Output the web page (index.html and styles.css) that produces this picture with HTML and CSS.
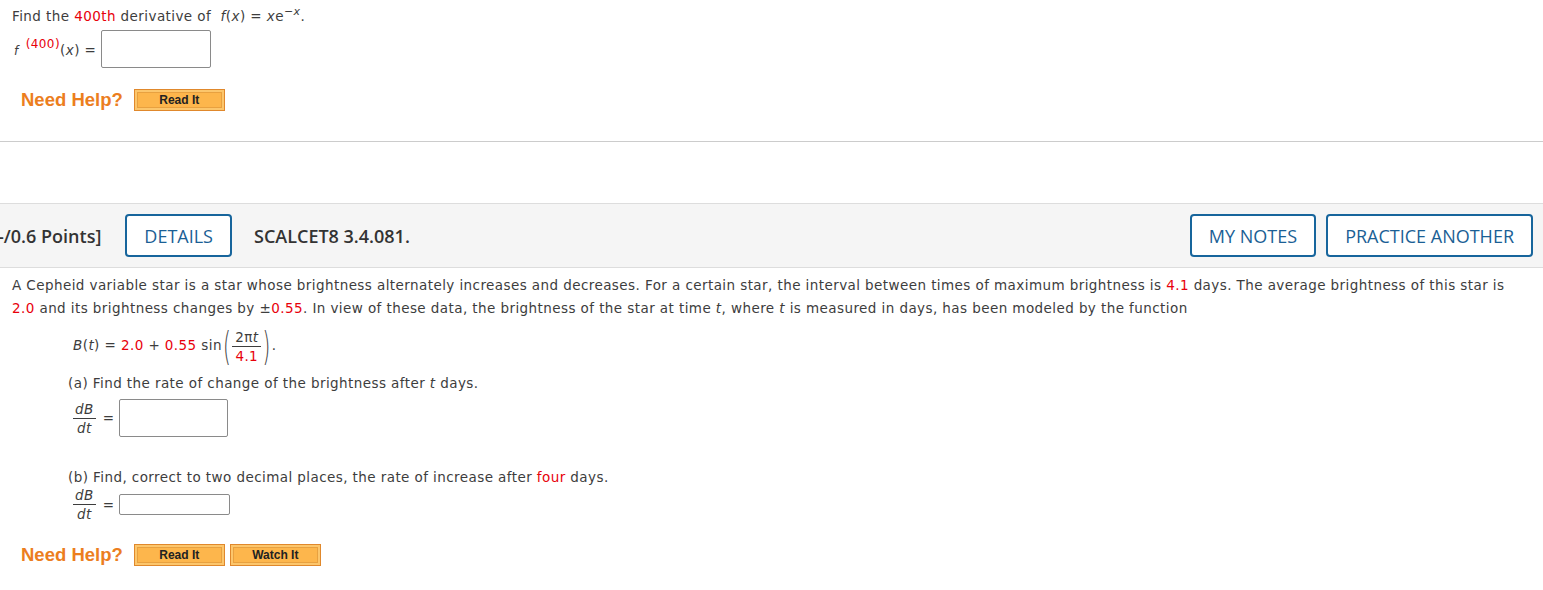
FILE: index.html
```html
<!DOCTYPE html>
<html lang="en">
<head>
  <meta charset="UTF-8">
  <title>Question</title>
  <link rel="stylesheet" href="styles.css">
</head>
<body>
  <div class="question first">
    <p class="line">Find the <span class="red">400th</span> derivative of &nbsp;<i>f</i>(<i>x</i>) = <i>x</i>e<sup class="exp">&minus;<i>x</i></sup>.</p>
    <div class="answer-row">
      <span class="lhs"><i class="ff">f</i><sup class="red order">(400)</sup>(<i>x</i>) =</span>
      <input type="text" class="box big">
    </div>
    <div class="help-row">
      <span class="need-help">Need Help?</span>
      <button class="help-btn">Read It</button>
    </div>
  </div>

  <hr class="divider">

  <div class="qbar">
    <span class="points">-/0.6 Points]</span>
    <button class="outline-btn">DETAILS</button>
    <span class="qid">SCALCET8 3.4.081.</span>
    <span class="spacer"></span>
    <button class="outline-btn">MY NOTES</button>
    <button class="outline-btn">PRACTICE ANOTHER</button>
  </div>

  <div class="question second">
    <p class="para">A Cepheid variable star is a star whose brightness alternately increases and decreases. For a certain star, the interval between times of maximum brightness is <span class="red">4.1</span> days. The average brightness of this star is <span class="red">2.0</span> and its brightness changes by &plusmn;<span class="red">0.55</span>. In view of these data, the brightness of the star at time <i>t</i>, where <i>t</i> is measured in days, has been modeled by the function</p>

    <div class="formula"><i>B</i>(<i>t</i>) = <span class="red">2.0</span> + <span class="red">0.55</span> sin<span class="paren">(</span><span class="frac small"><span class="num">2&pi;<i>t</i></span><span class="den red">4.1</span></span><span class="paren">)</span>.</div>

    <p class="part">(a) Find the rate of change of the brightness after <i>t</i> days.</p>
    <div class="deriv-row a">
      <span class="frac"><span class="num"><i>dB</i></span><span class="den"><i>dt</i></span></span>
      <span class="eq">=</span>
      <input type="text" class="box big2">
    </div>

    <p class="part b">(b) Find, correct to two decimal places, the rate of increase after <span class="red">four</span> days.</p>
    <div class="deriv-row">
      <span class="frac"><span class="num"><i>dB</i></span><span class="den"><i>dt</i></span></span>
      <span class="eq">=</span>
      <input type="text" class="box small-box">
    </div>

    <div class="help-row last">
      <span class="need-help">Need Help?</span>
      <button class="help-btn">Read It</button>
      <button class="help-btn">Watch It</button>
    </div>
  </div>
</body>
</html>
```

FILE: styles.css
```css
body {
  margin: 0;
  font-family: "DejaVu Sans", Verdana, sans-serif;
  font-size: 13.5px;
  letter-spacing: 0.42px;
  color: #3d3d3d;
  background: #fff;
}
.red {
  color: #e8000b;
}
p {
  margin: 0;
}
.question {
  padding: 0 12px;
}
.first {
  padding-top: 8px;
}
.line {
  line-height: 17px;
}
.exp {
  font-size: 11px;
  line-height: 0;
  vertical-align: 6px;
}
.answer-row {
  display: flex;
  align-items: center;
  gap: 5px;
  margin-top: 5px;
}
.lhs {
  padding-left: 2px;
  padding-top: 2px;
}
.ff {
  font-size: 12px;
  margin-right: 7px;
}
.order {
  font-size: 12px;
  line-height: 0;
  vertical-align: 7px;
}
.box {
  box-sizing: border-box;
  border: 1px solid #8a8a8a;
  border-radius: 2px;
  background: #fff;
  margin: 0;
  padding: 0;
}
.big {
  width: 110px;
  height: 38px;
}
.big2 {
  width: 109px;
  height: 38px;
}
.small-box {
  width: 111px;
  height: 21px;
}
.help-row {
  display: flex;
  align-items: center;
  margin-top: 21px;
  padding-left: 9px;
  letter-spacing: 0;
}
.need-help {
  font-family: "Liberation Sans", Arial, sans-serif;
  font-weight: bold;
  font-size: 18.5px;
  color: #ec7e1e;
  margin-right: 11px;
}
.help-btn {
  width: 91px;
  height: 22px;
  margin: 0 5px 0 0;
  padding: 0;
  font-family: "Liberation Sans", Arial, sans-serif;
  font-weight: bold;
  font-size: 12px;
  color: #222;
  background: #fdb64c;
  border: 1px solid #e0882c;
  box-shadow: inset 0 0 0 2px #fcc66c, inset 0 0 0 3px #e8a140;
  cursor: pointer;
}
.divider {
  border: 0;
  border-top: 1px solid #cccccc;
  margin: 30px 0 0;
}
.qbar {
  margin-top: 61px;
  display: flex;
  align-items: center;
  gap: 10px;
  padding: 10px 10px 10px 0;
  background: #f5f5f5;
  border-top: 1px solid #dddddd;
  border-bottom: 1px solid #dddddd;
  font-family: "Open Sans", sans-serif;
  font-size: 18px;
  letter-spacing: 0;
}
.points {
  font-weight: 600;
  color: #333;
  margin-left: -2px;
  margin-right: 14px;
}
.qid {
  font-weight: 600;
  color: #333;
  margin-left: 12px;
}
.spacer {
  flex: 1;
}
.outline-btn {
  height: 43px;
  padding: 0 17px;
  font-family: "Open Sans", sans-serif;
  font-size: 18px;
  color: #1b5f95;
  background: #fff;
  border: 2px solid #17659c;
  border-radius: 4px;
  cursor: pointer;
}
.second {
  padding-top: 6px;
}
.para {
  line-height: 23px;
}
.formula {
  margin: 6px 0 0 61px;
  height: 38px;
  line-height: 38px;
}
.paren {
  display: inline-block;
  font-size: 20px;
  font-weight: 200;
  line-height: 20px;
  vertical-align: middle;
  transform: scaleY(1.95);
  margin: 0 1px;
}
.frac {
  display: inline-flex;
  flex-direction: column;
  align-items: center;
  line-height: 18px;
}
.formula .frac {
  vertical-align: middle;
}
.frac .num {
  border-bottom: 1px solid #3d3d3d;
  padding: 0 2px;
}
.formula .frac .num {
  padding: 0 3px;
}
.part {
  margin: 10px 0 0 56px;
  line-height: 18px;
}
.part.b {
  margin-top: 1px;
}
.deriv-row {
  display: flex;
  align-items: center;
  margin-left: 61px;
}
.deriv-row.a {
  margin-top: 7px;
  margin-bottom: 31px;
}
.eq {
  margin: 0 5px 0 7px;
}
.help-row.last {
  margin-top: 21px;
}
```
